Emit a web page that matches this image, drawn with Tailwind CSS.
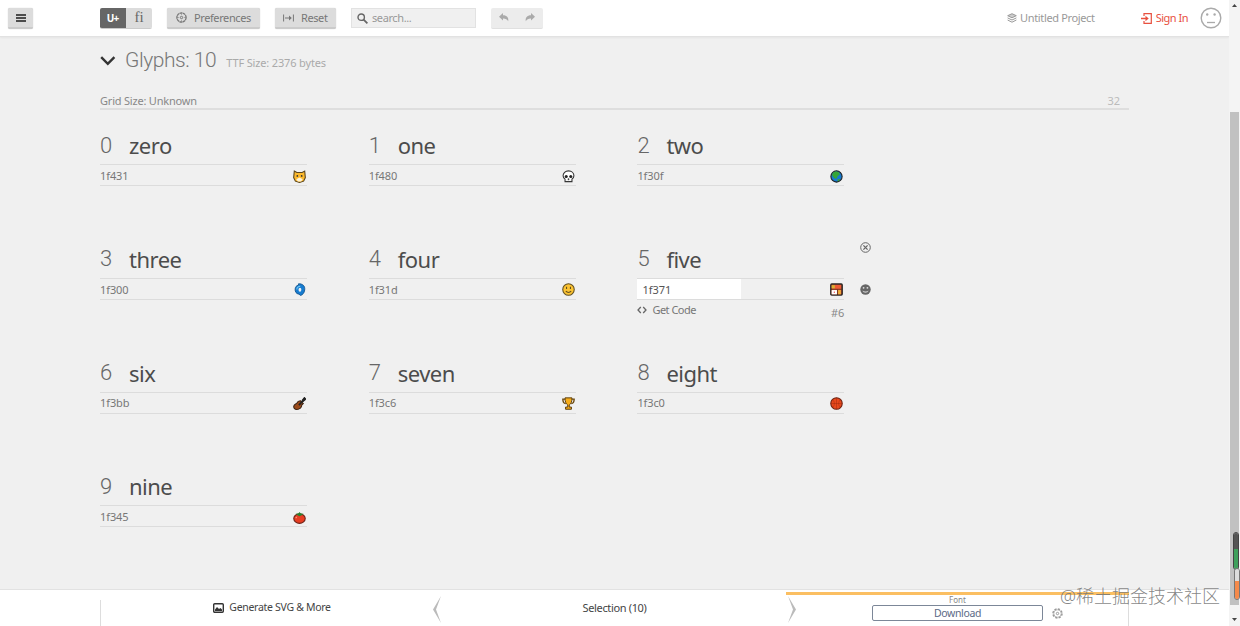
<!DOCTYPE html>
<html lang="en">
<head>
    <meta charset="UTF-8">
    <title>IcoMoon App - Font</title>
    <script src="https://cdn.jsdelivr.net/npm/@tailwindcss/browser@4"></script>
</head>
<body class="h-screen overflow-hidden bg-[#f0f0f0] font-['Noto_Sans',sans-serif] text-[11px] text-[#777]">
    <div class="flex h-full">
        <div class="flex min-w-0 flex-1 flex-col">
            <header class="flex h-[37px] shrink-0 items-center border-b border-[#e2e2e2] bg-white pl-2 pr-[7px] shadow-[0_1px_2px_rgba(0,0,0,0.05)]">
                <button class="flex h-[21px] w-[25px] items-center justify-center rounded-[2px] border-b-2 border-[#cbcbcb] bg-[#dcdcdc] pt-px shadow-[0_0_1px_#bbb]">
                    <svg width="10" height="8" viewBox="0 0 10 8" fill="#4c4c4c"><path d="M0 0h10v2H0zM0 3h10v2H0zM0 6h10v2H0z"/></svg>
                </button>
                <div class="ml-[67px] flex h-[21px] w-[52px] overflow-hidden rounded-[2px] border-b border-[#cbcbcb]">
                    <button class="w-[26px] bg-[#666] pr-px pt-px font-['Open_Sans',sans-serif] text-[10px] font-bold tracking-[-0.8px] text-white">U+</button>
                    <button class="w-[26px] bg-[#dcdcdc] font-['Liberation_Serif',serif] text-[15px] leading-none text-[#666]">fi</button>
                </div>
                <button class="ml-[15px] flex h-[21px] w-[93px] items-center rounded-[2px] border-b-2 border-[#cbcbcb] bg-[#dcdcdc] pl-[9px] pt-px shadow-[0_0_1px_#bbb]">
                    <svg width="11" height="11" viewBox="0 0 11 11" fill="none" stroke="#777"><circle cx="5.500" cy="5.500" r="4.600" stroke-width="1.300" stroke-dasharray="2.800 .4"/><circle cx="5.500" cy="5.500" r="1.200" stroke-width="1"/><path d="M5.500 1v2M5.500 8v2M1 5.500h2M8 5.500h2" stroke-width=".5"/></svg>
                    <span class="ml-[7px] pt-px tracking-[-0.4px]">Preferences</span>
                </button>
                <button class="ml-[15px] flex h-[21px] w-[61px] items-center rounded-[2px] border-b-2 border-[#cbcbcb] bg-[#dcdcdc] pl-2 pt-px shadow-[0_0_1px_#bbb]">
                    <svg width="11" height="8" viewBox="0 0 11 8" fill="none" stroke="#777"><path d="M.6.5v7M10.400.5v7M2 4h6"/><path d="M6 1.500L8.800 4 6 6.500z" fill="#777" stroke="none"/></svg>
                    <span class="ml-[7px] pt-px tracking-[-0.4px]">Reset</span>
                </button>
                <div class="ml-[15px] flex h-5 w-[125px] items-center border border-[#e2e2e2] bg-[#f0f0f0] pl-[5px]">
                    <svg width="11" height="11" viewBox="0 0 11 11" fill="none" stroke="#666"><circle cx="4.200" cy="4.200" r="3.200" stroke-width="1.400"/><path d="M6.600 6.600l3.800 3.700" stroke-width="1.800"/></svg>
                    <span class="ml-1 pt-px tracking-[-0.4px] text-[#999]">search...</span>
                </div>
                <div class="ml-[15px] flex h-[21px] w-[52px] items-center justify-between rounded-[2px] border-b border-[#e0e0e0] bg-[#ececec] px-[8px]">
                    <svg width="10" height="9" viewBox="0 0 10 9" fill="#aaa"><path d="M4 0v2.200C8 2.200 9.800 4.600 9.200 8.300 8 6 6.500 5.300 4 5.400v2L0 3.700z"/></svg>
                    <svg width="10" height="9" viewBox="0 0 10 9" fill="#aaa"><path d="M6 0v2.200C2 2.200.2 4.600.8 8.300 2 6 3.500 5.300 6 5.400v2l4-3.700z"/></svg>
                </div>
                <div class="ml-auto flex items-center">
                    <svg width="10" height="10" viewBox="0 0 10 10" fill="none" stroke="#999"><path d="M5 .7l4.300 2L5 4.800.7 2.700z" fill="#ccc"/><path d="M.6 4.900L5 7l4.400-2.100M.6 7L5 9.200 9.400 7"/></svg>
                    <span class="ml-[3px] tracking-[-0.35px] text-[#999]">Untitled Project</span>
                    <svg class="ml-[46px]" width="11" height="11" viewBox="0 0 11 11" fill="none" stroke="#e8503f"><path d="M3 3V.7h7.300v9.600H3V8" stroke-width="1.200"/><path d="M0 5.500h6" stroke-width="1.500"/><path d="M4.500 2.800l3.200 2.700-3.200 2.700z" fill="#e8503f" stroke="none"/></svg>
                    <span class="ml-[4px] tracking-[-0.5px] text-[#e8503f]">Sign In</span>
                    <svg class="ml-[12px]" width="22" height="22" viewBox="0 0 22 22" fill="none" stroke="#aaa"><circle cx="11" cy="11" r="9.800" stroke-width="1.400"/><path d="M7 15.500h8" stroke-width="1.300"/><circle cx="7.200" cy="7.500" r="1.200" fill="#aaa" stroke="none"/><circle cx="14.600" cy="7.500" r="1.200" fill="#aaa" stroke="none"/></svg>
                </div>
            </header>

            <main class="min-h-0 flex-1 pl-[100px]">
                <div class="w-[1029px]">
                    <div class="flex h-[46px] items-center pt-[2px]">
                        <svg width="16" height="10" viewBox="0 0 16 10" fill="none" stroke="#333" stroke-width="2.400"><path d="M1.200 1.200l6.600 6.600 6.600-6.600"/></svg>
                        <h1 class="ml-[9px] font-[Roboto,sans-serif] text-[21px] font-light tracking-[-0.45px] text-[#777]">Glyphs: 10</h1>
                        <span class="ml-[10px] mt-[5px] tracking-[-0.15px] text-[#aaa]">TTF Size: 2376 bytes</span>
                    </div>
                    <div class="flex h-[27px] items-center justify-between border-b-2 border-[#dedede] pt-[12px] pr-[9px]">
                        <span class="tracking-[-0.2px] text-[#888]">Grid Size: Unknown</span>
                        <span class="text-[#bbb]">32</span>
                    </div>
                </div>
                <div id="glyphs" class="grid auto-rows-[113.8px] grid-cols-[207px_207px_207px] gap-x-[61.700px]"></div>
            </main>

            <footer class="flex h-[37px] shrink-0 border-t border-[#e2e2e2] bg-white pl-[100px] text-[#444]">
                <div class="mt-[10px] w-px bg-[#ddd]"></div>
                <div class="flex w-[342px] items-center justify-center">
                    <svg width="11" height="10" viewBox="0 0 11 10"><rect x=".7" y=".7" width="9.600" height="8.600" rx="1" fill="none" stroke="#333" stroke-width="1.400"/><path d="M2 8V6.500l2-2.500 2 2 1.500-1L9 6.500V8z" fill="#333"/></svg>
                    <span class="ml-[5px] text-[10.500px] tracking-[-0.3px]">Generate SVG &amp; More</span>
                </div>
                <div class="relative flex w-[343px] items-center justify-center">
                    <svg class="absolute -left-[10px] top-[6px]" width="9" height="27" viewBox="0 0 9 27"><path d="M8 0L0 13.500 8 27 3 13.500z" fill="#bbb"/></svg>
                    <span class="tracking-[-0.35px]">Selection (10)</span>
                    <svg class="absolute -right-[10px] top-[6px]" width="9" height="27" viewBox="0 0 9 27"><path d="M1 0l8 13.500L1 27l5-13.500z" fill="#bbb"/></svg>
                </div>
                <div class="flex w-[343px] flex-col pt-[2px]">
                    <div class="h-[3px] bg-[#fbbf62]"></div>
                    <div class="text-center text-[8px] leading-[10px] text-[#888]">Font</div>
                    <div class="flex items-center pl-[86px]">
                        <button class="h-4 w-[171px] rounded-[2px] border border-[#7c8798] text-[10.500px] leading-[14px] tracking-[-0.35px] text-[#5c6a86]">Download</button>
                        <svg class="ml-[9px]" width="11" height="11" viewBox="0 0 11 11" fill="none" stroke="#999"><circle cx="5.500" cy="5.500" r="4.500" stroke-width="1.500" stroke-dasharray="2.200 1.300"/><circle cx="5.500" cy="5.500" r="3.700" stroke-width=".6"/><circle cx="5.500" cy="5.500" r="1.200"/></svg>
                    </div>
                </div>
                <div class="-ml-px mt-[10px] w-px bg-[#ddd]"></div>
            </footer>
        </div>

        <!-- scrollbar -->
        <div class="relative flex w-[11px] shrink-0 flex-col items-center bg-[#f4f4f4]">
            <svg class="mt-[4px]" width="5" height="3" viewBox="0 0 5 3"><path d="M0 3L2.500 0 5 3z" fill="#444"/></svg>
            <div class="mt-[105px] h-[493px] w-[9px] bg-[#c1c1c1]"></div>
            <svg class="mt-[13px]" width="5" height="3" viewBox="0 0 5 3"><path d="M0 0h5L2.500 3z" fill="#444"/></svg>
            <div class="absolute right-[1px] top-[532px] flex h-[38px] w-[6px] flex-col overflow-hidden rounded-[3px] border border-[#444]">
                <div class="h-[16px] bg-[#555]"></div>
                <div class="flex-1 bg-[#3fa05c]"></div>
            </div>
            <div class="absolute right-0 top-[568px] flex h-[32px] w-[6px] flex-col overflow-hidden rounded-[3px] border border-[#777]">
                <div class="h-[12px] bg-[#ddd]"></div>
                <div class="flex-1 bg-[#f58a4b]"></div>
            </div>
        </div>
    </div>

    <div class="absolute left-[1060px] top-[583px] whitespace-nowrap font-['Noto_Sans','Noto_Sans_CJK_SC',sans-serif] text-[18px] font-light leading-[26px] text-[#777]/90">@稀土掘金技术社区</div>

    <script>
        const glyphs = [
            { name: 'zero', code: '1f431', icon: '<path d="M1.200 1l2.300 1.300h5L10.800 1l.6 6-1.600 3.300L6 11.500l-3.800-1.200L.6 7z" fill="#fcb92c" stroke="#5a4620"/><circle cx="4" cy="5.500" r=".8" fill="#333"/><circle cx="8" cy="5.500" r=".8" fill="#333"/><path d="M3 8.500L6 7l3 1.500-1.500 2h-3z" fill="#fff3d8"/>' },
            { name: 'one', code: '1f480', icon: '<path d="M6 .8c3 0 5 2 5 4.600 0 1.500-.8 2.300-1.800 3v2.300H2.800V8.400C1.800 7.700 1 6.900 1 5.400 1 2.800 3 .8 6 .8z" fill="#fff" stroke="#333"/><circle cx="3.900" cy="6" r="1.400" fill="#222"/><circle cx="8.100" cy="6" r="1.400" fill="#222"/><path d="M5.500 8h1v1h-1zM4.500 10v1M6 10v1M7.500 10v1" stroke="#444" stroke-width=".5"/>' },
            { name: 'two', code: '1f30f', icon: '<circle cx="6" cy="6" r="5.200" fill="#187ad0" stroke="#222"/><path d="M2.500 2.500l3-1.300 3 1 .5 2-2 1.500L6 8 4 7.500 2 5z" fill="#36a637"/><path d="M7 8.500l2.500-.5-1 2-1.500.5z" fill="#36a637"/>' },
            { name: 'three', code: '1f300', icon: '<path d="M5 .8c4-.3 6.300 2 5.800 5.600C10.500 9 9 11 7 11.500L5.500 10.300C3 10 1.700 8 2 5.500 2.200 3.500 3 2.500 5 2z" fill="#167cd0" stroke="#13528c" stroke-width=".8"/><ellipse cx="6.400" cy="6.200" rx="1.300" ry="1.900" fill="#f0f0f0"/><path d="M3.500 6c.2-2 1.500-3 3.200-3" fill="none" stroke="#71c7f5"/>' },
            { name: 'four', code: '1f31d', icon: '<circle cx="6" cy="6" r="5.300" fill="#fcc332" stroke="#63501e"/><path d="M4.200 3.500v2M7.800 3.500v2M3.500 7.500c1.500 1.600 3.500 1.600 5 0" fill="none" stroke="#63501e"/>' },
            { name: 'five', code: '1f371', icon: '<rect x=".8" y="1" width="10.400" height="10" rx=".8" fill="#ed5a34" stroke="#2a2522" stroke-width="1.400"/><path d="M1.500 2h3v3h-3z" fill="#d9b132"/><path d="M1.500 6.500h5v4h-5z" fill="#fff"/><path d="M7.500 6.500H10v4H7.500z" fill="#eeb13a"/><path d="M1 5.800h10M6.900 6v5" stroke="#4d2b1c" stroke-width=".7"/><circle cx="4" cy="8.500" r=".6" fill="#e33"/>', active: true },
            { name: 'six', code: '1f3bb', icon: '<path d="M7 3.500L9.500 6 8 7.500c.3 2-2 4-4.500 4C1.500 11.500.3 10 .8 8.300 1.300 6.500 3 6.500 3.600 5.500 4.200 4 5.800 3.500 7 3.500z" fill="#9b4a1a" stroke="#3c2415"/><path d="M5.500 7.500l4-4.500" stroke="#222" stroke-width="1.600"/><path d="M8.500 3l2-2.500L12 2l-2.500 2z" fill="#222" stroke="#222"/>' },
            { name: 'seven', code: '1f3c6', icon: '<path d="M3 2H.8c0 2.500.8 4 2.700 4M9 2h2.200c0 2.500-.8 4-2.700 4" fill="none" stroke="#6b4a12" stroke-width="1.300"/><path d="M2.800.8h6.400c0 3.500-.7 5.500-2.500 6.500v2h2v2H3.300v-2h2v-2C3.500 6.300 2.800 4.300 2.800.8z" fill="#f8ad19" stroke="#593d0d" stroke-width=".9"/>' },
            { name: 'eight', code: '1f3c0', icon: '<circle cx="6" cy="6" r="5.300" fill="#e8481c" stroke="#6d2010"/><path d="M6 1v10M1 6h10M2.500 2.500c2 2 2 5 0 7M9.500 2.500c-2 2-2 5 0 7" fill="none" stroke="#99280f" stroke-width=".4"/>' },
            { name: 'nine', code: '1f345', icon: '<ellipse cx="6" cy="7" rx="5.300" ry="4.400" fill="#e83d22" stroke="#6d2318"/><path d="M2.500 2.500L5 2.300 6 1l1.200 1.300 2.500.2L8 4l-2 .8L4.200 4z" fill="#27822e"/><path d="M2.500 6.500l1-1" stroke="#ff9c7c"/>' }
        ];

        // tools shown only around the focused glyph
        const tools = `
            <div class="flex items-start justify-between pt-[3px]">
                <span class="flex items-center leading-[14px]">
                    <svg width="10" height="8" viewBox="0 0 10 8" fill="none" stroke="#666" stroke-width="1.300"><path d="M3.800 1L1 4l2.800 3M6.200 1L9 4 6.200 7"/></svg>
                    <span class="ml-[5px] tracking-[-0.5px]">Get Code</span>
                </span>
                <span class="pt-[3px] leading-[14px] text-[#888]">#6</span>
            </div>
            <svg class="absolute left-[223px] top-[18px]" width="11" height="11" viewBox="0 0 11 11" fill="none" stroke="#666"><circle cx="5.500" cy="5.500" r="4.800"/><path d="M3.400 3.400l4.200 4.200M7.600 3.400L3.400 7.600" stroke-width="1.300"/></svg>
            <svg class="absolute left-[223px] top-[60px]" width="11" height="11" viewBox="0 0 11 11"><circle cx="5.500" cy="5.500" r="5.200" fill="#666"/><circle cx="3.600" cy="3.800" r=".9" fill="#ddd"/><circle cx="7.400" cy="3.800" r=".9" fill="#ddd"/><path d="M2.500 6.500c1.500 1.200 4.500 1.200 6 0-.5 3-5.500 3-6 0z" fill="#ccc"/></svg>`;

        document.getElementById('glyphs').innerHTML = glyphs.map((g, i) => `
            <div class="relative pt-[18px]">
                <div class="flex h-[36px] items-center">
                    <span class="w-[29px] pb-[2px] font-[Roboto,sans-serif] text-[22px] font-light text-[#666]">${i}</span>
                    <span class="pb-[2px] text-[22px] leading-[34px] tracking-[-0.5px] text-[#4c4c4c]">${g.name}</span>
                </div>
                <div class="flex h-[22px] items-center justify-between border-y border-[#dcdcdc] pr-px">
                    <span class="${g.active ? 'h-full w-[104px] bg-white pl-[5px] leading-[21px] text-[#555]' : 'pt-[2px] tracking-[-0.1px]'}">${g.code}</span>
                    <svg class="mt-[2px]" width="13" height="13" viewBox="0 0 12 12">${g.icon}</svg>
                </div>
                ${g.active ? tools : ''}
            </div>`).join('');
    </script>
</body>
</html>
